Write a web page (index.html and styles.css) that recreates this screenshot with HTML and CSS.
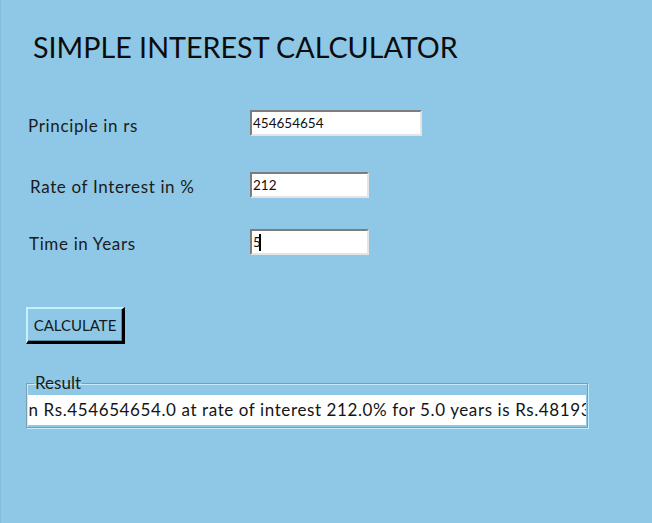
FILE: index.html
```html
<!DOCTYPE html>
<html>
<head>
<meta charset="utf-8">
<link rel="stylesheet" href="styles.css">
</head>
<body>
<div class="app">
  <h1 class="title">SIMPLE INTEREST CALCULATOR</h1>
  <div class="row row--principle">
    <span class="label label--principle">Principle in rs</span>
    <div class="field field--wide">454654654</div>
  </div>
  <div class="row row--rate">
    <span class="label label--rate">Rate of Interest in %</span>
    <div class="field">212</div>
  </div>
  <div class="row row--time">
    <span class="label label--time">Time in Years</span>
    <div class="field">5<span class="caret"></span></div>
  </div>
  <button class="calc">CALCULATE</button>
  <fieldset class="result">
    <legend class="result-legend">Result</legend>
    <div class="result-entry"><span class="result-text">Simple Interest on Rs.454654654.0 at rate of interest 212.0% for 5.0 years is Rs.4819338332.4</span></div>
  </fieldset>
</div>
</body>
</html>
```

FILE: styles.css
```css
html, body {
  margin: 0;
  padding: 0;
  height: 100%;
}
body {
  background: #8ec8e6;
  font-family: Lato, "Open Sans", sans-serif;
  color: #1b1b1b;
  border-left: 1px solid #84bcda;
  box-sizing: border-box;
}
.app {
  display: flex;
  flex-direction: column;
  align-items: flex-start;
  padding: 0 0 0 24px;
}
.title {
  margin: 29px 0 0 8px;
  font-size: 28.7px;
  font-weight: 400;
  line-height: 37px;
  color: #0c0c0c;
  letter-spacing: 0;
}
.row {
  display: flex;
  align-items: center;
  height: 26px;
}
.row--principle { margin-top: 44px; }
.row--rate { margin-top: 36px; }
.row--time { margin-top: 31px; }
.label {
  font-size: 17px;
  letter-spacing: 0.65px;
  width: 221px;
  padding-top: 5px;
}
.label--principle { padding-left: 3px; width: 222px; }
.label--rate { padding-left: 5px; width: 220px; padding-top: 2px; }
.label--time { padding-left: 4px; width: 221px; padding-top: 2px; }
.field {
  box-sizing: border-box;
  width: 119px;
  height: 26px;
  background: #fff;
  border-top: 2px solid #7d7d7d;
  border-left: 2px solid #7d7d7d;
  border-right: 2px solid #e4e4e4;
  border-bottom: 2px solid #e4e4e4;
  font-size: 13.5px;
  line-height: 21px;
  padding-left: 1px;
  color: #111;
  display: flex;
  align-items: center;
}
.field--wide { width: 172px; }
.caret {
  display: inline-block;
  width: 2px;
  height: 17px;
  background: #000;
  margin-left: -2px;
}
.calc {
  margin: 52px 0 0 1px;
  width: 99px;
  height: 37px;
  box-sizing: border-box;
  background: #8ec8e6;
  border-style: solid;
  border-width: 2px 3px 3px 2px;
  border-color: #c4f2ff #000 #000 #c4f2ff;
  box-shadow: inset -1px -1px 0 #5d8ba2;
  font-family: Lato, "Open Sans", sans-serif;
  font-size: 15px;
  color: #141a24;
  padding: 0;
}
.result {
  margin: 31px 0 0 1px;
  width: 562px;
  box-sizing: border-box;
  padding: 0 1px 2px 1px;
  border: 1px solid #7a9db0;
  box-shadow: 1px 1px 0 #c4ecff, inset 1px 1px 0 #c4ecff;
  min-width: 0;
}
.result-legend {
  margin-left: 6px;
  padding: 0 1px;
  font-size: 17px;
  line-height: 16px;
  color: #1b1b1b;
}
.result-entry {
  margin-top: 4px;
  height: 30px;
  background: #fff;
  overflow: hidden;
  white-space: nowrap;
  font-size: 17px;
  letter-spacing: 0.6px;
  line-height: 30px;
  color: #141414;
}
.result-text {
  display: inline-block;
  margin-left: -135px;
}
```
